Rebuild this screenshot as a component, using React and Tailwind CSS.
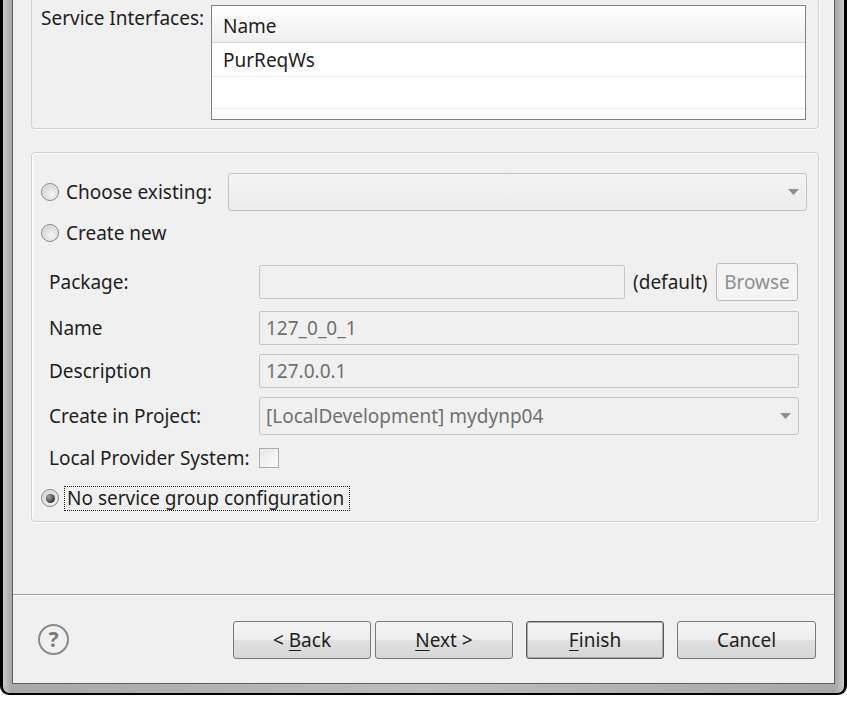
import { useState } from 'react';

const BTN = 'flex h-[38px] items-center justify-center rounded-[3px] border text-[19px] text-[#1e1e1e] bg-[linear-gradient(#f5f5f5_0%,#ededed_48%,#e0e0e0_52%,#d6d6d6_100%)]';

function Radio({ checked }) {
  return (
    <span className="flex h-[18px] w-[18px] shrink-0 items-center justify-center rounded-full border border-[#878787] bg-[radial-gradient(circle_at_60%_65%,#f6f6f6_0%,#dcdcdc_55%,#c4c4c4_100%)] shadow-[inset_0_0_0_1px_#ececec]">
      {checked && <span className="h-[9px] w-[9px] rounded-full bg-[radial-gradient(circle_at_35%_35%,#a0a0a0_0%,#404040_65%,#222_100%)]" />}
    </span>
  );
}

function Arrow() {
  return (
    <svg width="11" height="6" viewBox="0 0 11 6" className="shrink-0">
      <path d="M0 0 H11 L5.5 6 Z" fill="#8e8e8e" />
    </svg>
  );
}

function Field({ value, className = '' }) {
  return (
    <div className={`flex h-[34px] items-center rounded-[2px] border border-[#c6c6c6] bg-[#f0f0f0] pl-[6px] text-[#707070] ${className}`}>
      {value}
    </div>
  );
}

export default function App() {
  const [choice, setChoice] = useState('none');

  return (
    <div className="h-[702px] w-[847px] overflow-hidden bg-white font-['Noto_Sans',sans-serif] text-[19px] leading-[26px] text-[#1e1e1e]">
      <div className="h-[695px] rounded-b-[9px] border-x-[3px] border-b-[2px] border-black bg-[linear-gradient(90deg,#c9c9c9,#a8a8a8_1%,#bdbdbd_50%,#a8a8a8_99%,#c9c9c9)] px-[9px] pb-[9px]">
        <div className="flex h-[684px] w-[823px] flex-col border-x border-b border-[#5e5e5e] bg-[#f0f0f0]">
          {/* service interfaces group */}
          <div className="ml-[18px] mr-[15px] flex h-[129px] rounded-b-[4px] border-x border-b border-[#d2d2d2] shadow-[1px_1px_0_#fff]">
            <div className="w-[179px] shrink-0 pl-[9px] pt-[5px]">Service Interfaces:</div>
            <div className="mr-[12px] mt-[5px] flex h-[115px] flex-1 flex-col border border-[#838383] bg-white">
              <div className="flex h-[37px] shrink-0 items-center border-b border-[#d5d5d5] bg-[linear-gradient(#ffffff,#f7f7f7_50%,#efefef)] pl-[11px] pt-[3px]">Name</div>
              <div className="flex h-[34px] shrink-0 items-center border-b border-[#ececec] pl-[11px]">PurReqWs</div>
              <div className="h-[32px] shrink-0 border-b border-[#ececec]" />
            </div>
          </div>

          {/* options group */}
          <div className="ml-[18px] mr-[15px] mt-[23px] h-[370px] rounded-[4px] border border-[#d2d2d2] shadow-[inset_1px_1px_0_#fff,1px_1px_0_#fff]">
            <div className="mt-[20px] flex h-[38px] items-center pl-[9px] pr-[11px]">
              <label className="flex w-[187px] shrink-0 items-center gap-[7px]" onClick={() => setChoice('existing')}>
                <Radio checked={choice === 'existing'} />
                <span>Choose existing:</span>
              </label>
              <div className="flex h-[38px] flex-1 items-center justify-end rounded-[3px] border border-[#c3c3c3] bg-[linear-gradient(#f4f4f4,#ececec)] pr-[7px]">
                <Arrow />
              </div>
            </div>

            <label className="mt-[9px] flex h-[26px] items-center gap-[7px] pl-[9px]" onClick={() => setChoice('new')}>
              <Radio checked={choice === 'new'} />
              <span>Create new</span>
            </label>

            <div className="mt-[17px] flex h-[38px] items-center pl-[17px] pr-[19px]">
              <span className="w-[210px] shrink-0">Package:</span>
              <Field value="" className="w-[366px]" />
              <span className="ml-[8px]">(default)</span>
              <div className="ml-auto mr-[1px] flex h-[38px] w-[82px] items-center justify-center rounded-[3px] border border-[#b9b9b9] bg-[#f4f4f4] text-[#8f8f8f]">Browse</div>
            </div>

            <div className="mt-[10px] flex items-center pl-[17px] pr-[19px]">
              <span className="w-[210px] shrink-0">Name</span>
              <Field value="127_0_0_1" className="flex-1" />
            </div>

            <div className="mt-[9px] flex items-center pl-[17px] pr-[19px]">
              <span className="w-[210px] shrink-0">Description</span>
              <Field value="127.0.0.1" className="flex-1" />
            </div>

            <div className="mt-[9px] flex items-center pl-[17px] pr-[19px]">
              <span className="w-[210px] shrink-0">Create in Project:</span>
              <div className="flex h-[38px] flex-1 items-center justify-between rounded-[3px] border border-[#c6c6c6] bg-[#f0f0f0] pl-[6px] pr-[7px] text-[#707070]">
                <span>[LocalDevelopment] mydynp04</span>
                <Arrow />
              </div>
            </div>

            <div className="mt-[10px] flex h-[26px] items-center pl-[17px]">
              <span className="w-[210px] shrink-0">Local Provider System:</span>
              <span className="h-[20px] w-[20px] border border-[#acacac] bg-[linear-gradient(135deg,#e8e8e8,#fbfbfb)]" />
            </div>

            <label className="mt-[14px] flex h-[26px] items-center gap-[5px] pl-[9px]" onClick={() => setChoice('none')}>
              <Radio checked={choice === 'none'} />
              <span className="border border-dotted border-[#222] pl-[2px] pr-[5px] leading-[23px]">No service group configuration</span>
            </label>
          </div>

          {/* separator */}
          <div className="mt-[72px] h-[2px] shrink-0 border-t border-b border-t-[#a3a3a3] border-b-white" />

          {/* button bar */}
          <div className="flex items-center pl-[25px] pr-[18px] pt-[25px]">
            <div className="mb-[2px] flex h-[31px] w-[31px] items-center justify-center rounded-full border-2 border-[#8a8a8a] text-[21px] font-bold leading-none text-[#7a7a7a]">?</div>
            <div className="ml-auto flex">
              <div className={`${BTN} w-[138px] border-[#7a7a7a]`}>&lt;&nbsp;<span className="underline underline-offset-[3px]">B</span>ack</div>
              <div className={`${BTN} ml-[4px] w-[138px] border-[#7a7a7a]`}><span className="underline underline-offset-[3px]">N</span>ext &gt;</div>
              <div className={`${BTN} ml-[13px] w-[138px] border-[#5a5a5a] shadow-[inset_0_0_0_1px_#a9a9a9]`}><span className="underline underline-offset-[3px]">F</span>inish</div>
              <div className={`${BTN} ml-[13px] w-[139px] border-[#7a7a7a]`}>Cancel</div>
            </div>
          </div>
        </div>
      </div>
    </div>
  );
}
